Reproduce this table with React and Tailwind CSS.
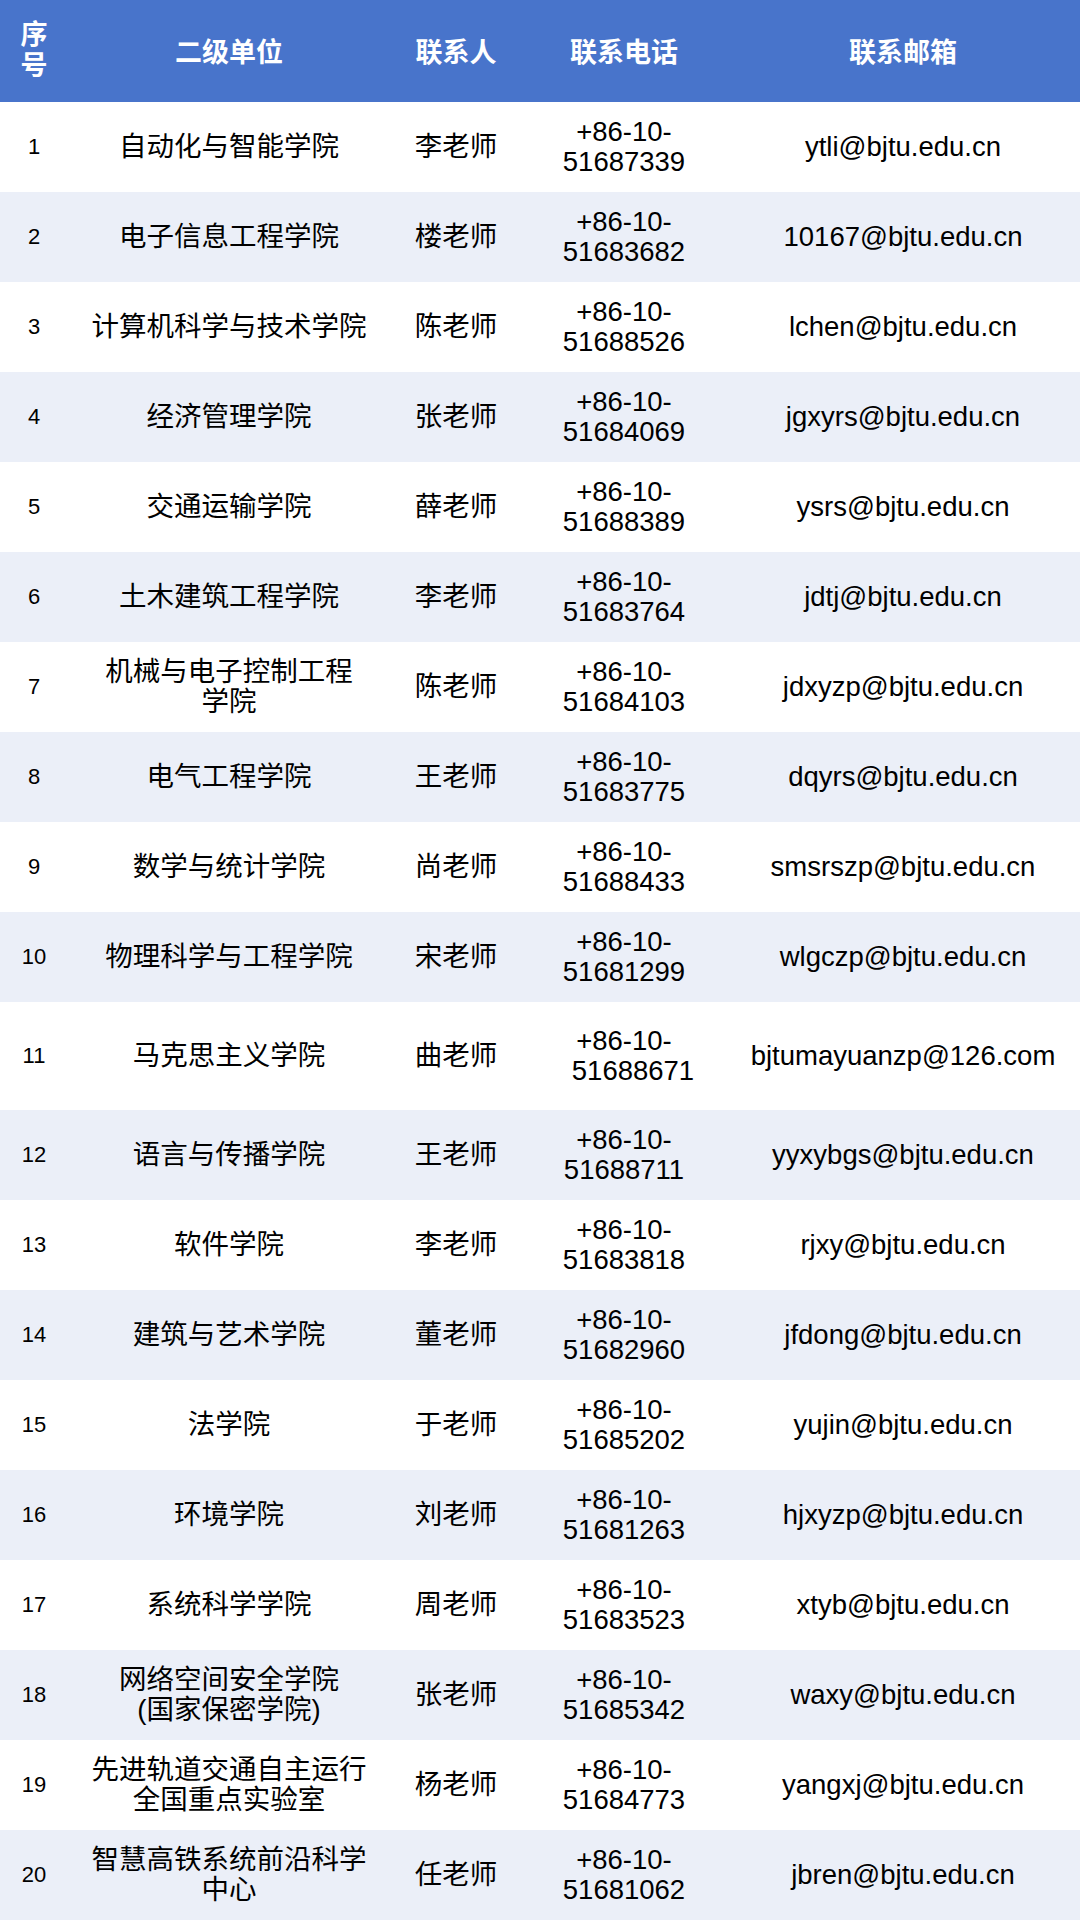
import React from "react";

const rows = [
  ["1", ["自动化与智能学院"], "李老师", "51687339", "ytli@bjtu.edu.cn"],
  ["2", ["电子信息工程学院"], "楼老师", "51683682", "10167@bjtu.edu.cn"],
  ["3", ["计算机科学与技术学院"], "陈老师", "51688526", "lchen@bjtu.edu.cn"],
  ["4", ["经济管理学院"], "张老师", "51684069", "jgxyrs@bjtu.edu.cn"],
  ["5", ["交通运输学院"], "薛老师", "51688389", "ysrs@bjtu.edu.cn"],
  ["6", ["土木建筑工程学院"], "李老师", "51683764", "jdtj@bjtu.edu.cn"],
  ["7", ["机械与电子控制工程", "学院"], "陈老师", "51684103", "jdxyzp@bjtu.edu.cn"],
  ["8", ["电气工程学院"], "王老师", "51683775", "dqyrs@bjtu.edu.cn"],
  ["9", ["数学与统计学院"], "尚老师", "51688433", "smsrszp@bjtu.edu.cn"],
  ["10", ["物理科学与工程学院"], "宋老师", "51681299", "wlgczp@bjtu.edu.cn"],
  ["11", ["马克思主义学院"], "曲老师", "51688671", "bjtumayuanzp@126.com"],
  ["12", ["语言与传播学院"], "王老师", "51688711", "yyxybgs@bjtu.edu.cn"],
  ["13", ["软件学院"], "李老师", "51683818", "rjxy@bjtu.edu.cn"],
  ["14", ["建筑与艺术学院"], "董老师", "51682960", "jfdong@bjtu.edu.cn"],
  ["15", ["法学院"], "于老师", "51685202", "yujin@bjtu.edu.cn"],
  ["16", ["环境学院"], "刘老师", "51681263", "hjxyzp@bjtu.edu.cn"],
  ["17", ["系统科学学院"], "周老师", "51683523", "xtyb@bjtu.edu.cn"],
  ["18", ["网络空间安全学院", "(国家保密学院)"], "张老师", "51685342", "waxy@bjtu.edu.cn"],
  ["19", ["先进轨道交通自主运行", "全国重点实验室"], "杨老师", "51684773", "yangxj@bjtu.edu.cn"],
  ["20", ["智慧高铁系统前沿科学", "中心"], "任老师", "51681062", "jbren@bjtu.edu.cn"],
];

const font = { fontFamily: '"Liberation Sans", Arial, "Noto Sans CJK SC", sans-serif' };

export default function App() {
  return (
    <div className="w-[1080px] h-[1920px] bg-white text-black overflow-hidden" style={font}>
      <div className="grid grid-cols-[68px_322px_132px_204px_354px] h-[102px] bg-[#4874cb] text-white font-bold text-[27px] leading-[31px] items-center text-center">
        <div className="flex flex-col items-center">
          <span>序</span>
          <span>号</span>
        </div>
        <div className="pt-[4px]">二级单位</div>
        <div className="pt-[4px]">联系人</div>
        <div className="pt-[4px]">联系电话</div>
        <div className="pt-[4px]">联系邮箱</div>
      </div>
      {rows.map((r, i) => {
        const tall = r[0] === "11";
        return (
          <div
            key={r[0]}
            className={`grid grid-cols-[68px_322px_132px_204px_354px] items-center text-center text-[27.5px] leading-[30px] ${
              tall ? "h-[108px]" : "h-[90px]"
            } ${i % 2 === 1 ? "bg-[#ebeff8]" : "bg-white"}`}
          >
            <div className="text-[22px]">{r[0]}</div>
            <div className="flex flex-col items-center">
              {r[1].map((l) => (
                <span key={l}>{l}</span>
              ))}
            </div>
            <div>{r[2]}</div>
            <div className="flex flex-col items-center">
              <span>+86-10-</span>
              <span className={tall ? "pl-[18px]" : ""}>{r[3]}</span>
            </div>
            <div>{r[4]}</div>
          </div>
        );
      })}
    </div>
  );
}
